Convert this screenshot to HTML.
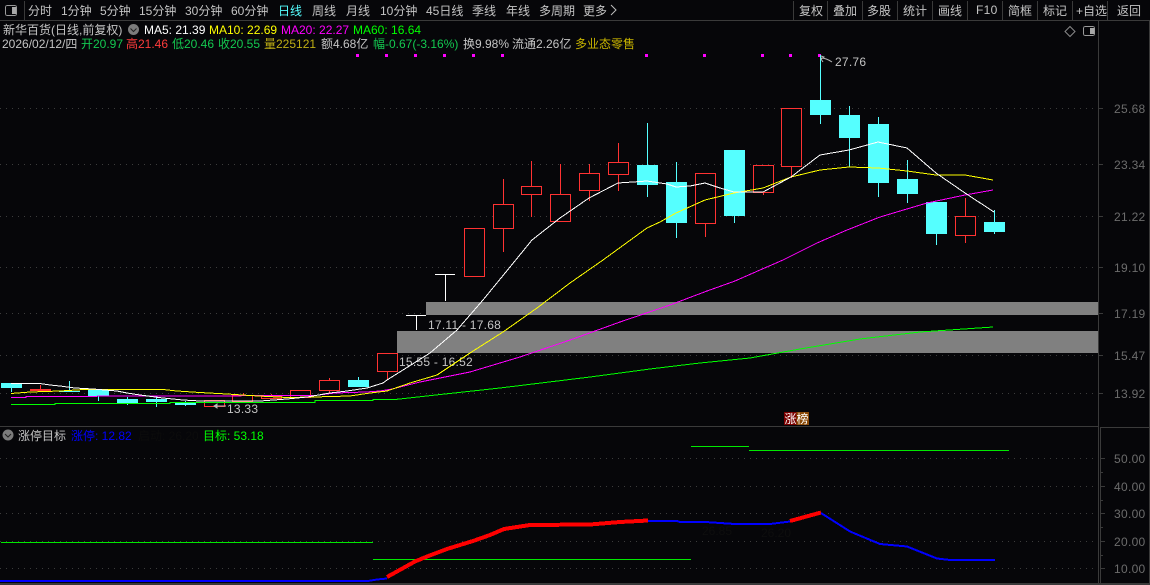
<!DOCTYPE html>
<html><head><meta charset="utf-8"><style>
html,body{margin:0;padding:0;background:#060609;width:1150px;height:585px;overflow:hidden}
svg{display:block}
text{font-family:"Liberation Sans","WenQuanYi Zen Hei","Noto Sans CJK SC",sans-serif;font-size:12px;fill:#c4c4c4}
.m{letter-spacing:0}
.r{letter-spacing:.25px}
.t{letter-spacing:.3px}
.a{fill:#6c6c6c;font-size:12px;letter-spacing:.3px}
.c{shape-rendering:crispEdges}
.hr rect{fill:#060609;stroke:#ff3232;stroke-width:1}
.hr path{stroke:#ff3232;stroke-width:1;fill:none}
.cy path{stroke:#55ffff;stroke-width:1;fill:none}
.cy rect{fill:#55ffff}
.ln{fill:none;stroke-width:1;shape-rendering:crispEdges}
</style></head><body>
<svg width="1150" height="585" viewBox="0 0 1150 585" xmlns="http://www.w3.org/2000/svg">
<rect width="1150" height="585" fill="#060609"/>
<!-- frame lines -->
<g class="c" fill="#3a3a3a">
<rect x="0" y="20" width="1150" height="1"/>
<rect x="1098" y="21" width="1" height="562"/>
<rect x="0" y="426" width="1098" height="1"/>
<rect x="1100" y="427" width="50" height="1"/>
<rect x="1100" y="427" width="1" height="156"/>
<rect x="0" y="583" width="1150" height="2"/>
<rect x="1149" y="21" width="1" height="564"/>
<rect x="24" y="1" width="1" height="19"/>
<rect x="793" y="1" width="1" height="19"/><rect x="827" y="1" width="1" height="19"/><rect x="862" y="1" width="1" height="19"/><rect x="897" y="1" width="1" height="19"/><rect x="932" y="1" width="1" height="19"/><rect x="967" y="1" width="1" height="19"/><rect x="1002" y="1" width="1" height="19"/><rect x="1037" y="1" width="1" height="19"/><rect x="1072" y="1" width="1" height="19"/><rect x="1107" y="1" width="1" height="19"/>
<rect x="1098" y="108" width="5" height="1"/><rect x="1098" y="164" width="5" height="1"/><rect x="1098" y="216" width="5" height="1"/><rect x="1098" y="267" width="5" height="1"/><rect x="1098" y="313" width="5" height="1"/><rect x="1098" y="355" width="5" height="1"/><rect x="1098" y="393" width="5" height="1"/>
<rect x="1100" y="458" width="5" height="1"/><rect x="1100" y="486" width="5" height="1"/><rect x="1100" y="513" width="5" height="1"/><rect x="1100" y="541" width="5" height="1"/><rect x="1100" y="568" width="5" height="1"/>
<rect x="1100" y="472" width="3" height="1"/><rect x="1100" y="500" width="3" height="1"/><rect x="1100" y="527" width="3" height="1"/><rect x="1100" y="555" width="3" height="1"/>
</g>
<!-- grid -->
<g class="c" stroke="#3c3c3c" stroke-width="1" stroke-dasharray="1 5">
<path d="M0 108.5H1098M0 164.5H1098M0 216.5H1098M0 267.5H1098M0 313.5H1098M0 355.5H1098M0 393.5H1098"/>
<path d="M0 458.5H1098M0 486.5H1098M0 513.5H1098M0 541.5H1098M0 568.5H1098"/>
</g>
<!-- toolbar -->
<rect class="c" x="5.5" y="5.5" width="11" height="10" rx="2" fill="none" stroke="#9a9a9a"/>
<rect class="c" x="12" y="7" width="4" height="7" fill="#a8a8a8"/>
<g font-size="12">
<text x="28" y="15">分时</text><text x="61" y="15">1分钟</text><text x="100" y="15">5分钟</text><text x="139" y="15">15分钟</text><text x="185" y="15">30分钟</text><text x="231" y="15">60分钟</text><text x="278" y="15" style="fill:#55ffff">日线</text><text x="312" y="15">周线</text><text x="346" y="15">月线</text><text x="380" y="15">10分钟</text><text x="426" y="15">45日线</text><text x="472" y="15">季线</text><text x="506" y="15">年线</text><text x="539" y="15">多周期</text><text x="583" y="15">更多</text>
<path d="M611 5l5 5-5 5" fill="none" stroke="#bdbdbd"/>
<text x="799" y="15">复权</text><text x="833" y="15">叠加</text><text x="867" y="15">多股</text><text x="903" y="15">统计</text><text x="938" y="15">画线</text><text x="976" y="14" class="t">F10</text><text x="1008" y="15">简框</text><text x="1043" y="15">标记</text><text x="1076" y="15">+自选</text><text x="1117" y="15">返回</text>
</g>
<!-- info rows -->
<text x="3" y="34">新华百货(日线,前复权)</text>
<circle cx="133.500" cy="29.500" r="5.500" fill="#7c7c7c"/><path d="M130.500 28.500l3 3 3-3" fill="none" stroke="#222"/>
<text x="144" y="34" class="m" style="fill:#fff">MA5: 21.39</text>
<text x="209" y="34" class="m" style="fill:#ffff00">MA10: 22.69</text>
<text x="281" y="34" class="m" style="fill:#ff00ff">MA20: 22.27</text>
<text x="353" y="34" class="m" style="fill:#00ff00">MA60: 16.64</text>
<text x="2" y="48" class="m">2026/02/12/四</text>
<text x="81" y="48" class="m" style="fill:#14c850">开20.97</text>
<text x="126" y="48" class="m" style="fill:#ff3c3c">高21.46</text>
<text x="172" y="48" class="m" style="fill:#14c850">低20.46</text>
<text x="218" y="48" class="m" style="fill:#14c850">收20.55</text>
<text x="264" y="48" class="m" style="fill:#bfae14">量225121</text>
<text x="321" y="48" class="m">额4.68亿</text>
<text x="373" y="48" class="m" style="fill:#14c850">幅-0.67(-3.16%)</text>
<text x="463" y="48" class="m">换9.98%</text>
<text x="512" y="48" class="m">流通2.26亿</text>
<text x="575" y="48" style="fill:#c8b400">多业态零售</text>
<path d="M1070 26.500l5 5-5 5-5-5z" fill="none" stroke="#8a8a8a"/>
<rect class="c" x="1083.500" y="26.500" width="11" height="9" rx="2" fill="none" stroke="#9a9a9a"/><rect class="c" x="1090" y="28" width="4" height="6" fill="#a8a8a8"/>
<!-- magenta markers -->
<g class="c" fill="#ff00ff"><rect x="356" y="54" width="3" height="3"/><rect x="385" y="54" width="3" height="3"/><rect x="414" y="54" width="3" height="3"/><rect x="443" y="54" width="3" height="3"/><rect x="472" y="54" width="3" height="3"/><rect x="501" y="54" width="3" height="3"/><rect x="645" y="54" width="3" height="3"/><rect x="703" y="54" width="3" height="3"/><rect x="761" y="54" width="3" height="3"/><rect x="789" y="54" width="3" height="3"/><rect x="818" y="54" width="3" height="3"/></g>
<!-- cyan candles -->
<g class="cy c">
<path d="M11.500 388V392M69.500 381V392M98.500 396V401M127.500 397V405M156.500 397V407M185.500 401V406M358.500 377V381M647.500 123V197M676.500 162V238M734.500 216V223M820.500 55V124M849.500 106V167M878.500 117V197M907.500 160V203M936.500 234V245M994.500 210V234"/>
<rect x="1" y="383" width="21" height="5"/><rect x="59" y="391" width="21" height="1"/><rect x="88" y="389" width="21" height="7"/><rect x="117" y="399" width="21" height="4"/><rect x="146" y="399" width="21" height="3"/><rect x="175" y="402" width="21" height="3"/><rect x="348" y="380" width="21" height="7"/>
<rect x="637" y="165" width="21" height="20"/><rect x="666" y="182" width="21" height="41"/><rect x="724" y="150" width="21" height="66"/><rect x="810" y="100" width="21" height="15"/><rect x="839" y="115" width="21" height="23"/><rect x="868" y="124" width="21" height="59"/><rect x="897" y="179" width="21" height="15"/><rect x="926" y="202" width="21" height="32"/><rect x="984" y="222" width="21" height="10"/>
</g>
<!-- red candles -->
<g class="hr c">
<path d="M40.500 385V390M243.500 393V396M271.500 394V397M329.500 378V381M329.500 391V393M387.500 371V380M503.500 179V204M503.500 229V252M531.500 161V186M531.500 195V217M560.500 164V194M589.500 164V173M589.500 191V201M618.500 143V162M618.500 174V191M705.500 224V237M763.500 192V195M791.500 167V178M965.500 198V216M965.500 236V243"/>
<rect x="30" y="389" width="21" height="2" style="fill:#ff3232;stroke:none"/>
<rect x="204.500" y="400.500" width="20" height="6"/><rect x="232.500" y="395.500" width="20" height="6"/><rect x="261.500" y="396.500" width="20" height="2"/><rect x="290.500" y="390.500" width="20" height="7"/><rect x="319.500" y="380.500" width="20" height="10"/>
<rect x="377.500" y="353.500" width="20" height="18"/><rect x="464.500" y="228.500" width="20" height="48"/><rect x="493.500" y="204.500" width="20" height="24"/><rect x="521.500" y="186.500" width="20" height="8"/><rect x="550.500" y="194.500" width="20" height="27"/><rect x="579.500" y="173.500" width="20" height="17"/><rect x="608.500" y="162.500" width="20" height="12"/><rect x="695.500" y="173.500" width="20" height="50"/><rect x="753.500" y="165.500" width="20" height="27"/><rect x="781.500" y="108.500" width="20" height="58"/><rect x="955.500" y="216.500" width="20" height="19"/>
</g>
<!-- T candles -->
<path class="c" d="M406 315.500H426M416.500 315V330M435 274.500H455M445.500 274V301" stroke="#fff" fill="none"/>
<!-- bands -->
<rect class="c" x="426" y="302" width="672" height="13" fill="#808080"/>
<rect class="c" x="397" y="331" width="701" height="22" fill="#808080"/>
<!-- labels -->
<text x="428" y="329" class="r">17.11 - 17.68</text>
<text x="399" y="366" class="r">15.55 - 16.52</text>
<text x="835" y="66" class="r">27.76</text>
<text x="227" y="413" class="r">13.33</text>
<path d="M821 56l3 1 -3 2 2 3M821 58q5 0 11 4" fill="none" stroke="#b8b8b8"/>
<path d="M214 406l3-2v4zM216 406H226" fill="#b8b8b8" stroke="#b8b8b8"/>
<!-- MAs -->
<polyline class="ln" stroke="#00ff00" points="11,404.500 55,404.500 55,403.500 170,403.500 170,402.500 315,402.500 315,400.500 373,400.500 373,399.500 395,399.500 445,394 500,388 590,377 650,369 700,363 750,358 800,349 860,339 920,332 993,327"/>
<polyline class="ln" stroke="#ff00ff" points="11,397.500 26,397.500 26,396.500 315,395.500 335,393 366,392 380,391 392,389 420,382 470,372 520,357 570,340 620,322 670,305 707,291 735,281 760,270 783,260 817,243 847,230 880,217 927,203 965,195 993,190"/>
<polyline class="ln" stroke="#ffff00" points="11,393.500 30,392 60,391 84,389.500 163,389.500 177,391 200,392.500 227,394 250,395.500 287,397.500 313,397 350,396 370,393 387,391 410,383 437,375 470,353 503,332 537,308 570,283 603,260 647,228 660,222 676,213 705,200 734,193 763,188 791,177 820,170 849,167 878,168 907,171 936,175 965,175 993,180"/>
<polyline class="ln" stroke="#ffffff" points="11,383.500 40,383.500 50,385 60,386 75,388 93,389 117,391 127,393 140,395 163,398 183,400 200,401 260,401 287,399 307,397 330,393 347,391 367,388 383,383 387,380 403,370 430,353 457,330 483,300 510,267 532,240 560,218 589,198 618,183 633,182 647,181 667,184 676,187 690,186 705,183 720,188 734,192 763,192 791,177 820,155 849,150 878,142 907,148 936,173 965,193 994,212"/>
<!-- 涨榜 -->
<rect class="c" x="784" y="412" width="12.500" height="13" fill="#7a0000"/><rect class="c" x="796.500" y="412" width="12.500" height="13" fill="#8a4a08"/>
<text x="784.500" y="423" style="fill:#fff">涨榜</text>
<!-- lower panel header -->
<circle cx="8" cy="435" r="5.500" fill="#7c7c7c"/><path d="M5 434l3 3 3-3" fill="none" stroke="#222"/>
<text x="18" y="440">涨停目标</text>
<text x="71" y="440" class="m" style="fill:#0000ff">涨停: 12.82</text>
<text x="138" y="440" class="m" style="fill:#0c0c0c">启动: 26.20</text>
<text x="203" y="440" class="m" style="fill:#00ff00">目标: 53.18</text>
<!-- lower panel -->
<path class="c" d="M1 542.500H373M373 559.500H691M691 446.500H749M749 450.500H1009" stroke="#00e800" fill="none"/>
<text x="702" y="535" style="fill:#0e0e0e;font-size:12px">26.85</text>
<text x="761" y="537" style="fill:#0e0e0e;font-size:12px">26.20</text>
<polyline class="c" fill="none" stroke="#0000ff" stroke-width="2" points="0,581 368,581 377,579.500 387,578.500"/>
<polyline class="c" fill="none" stroke="#ff0000" stroke-width="4" points="387,577 415,561.500 427,556.500 447,549 473,541 490,535 504,529 530,525 590,524.500 620,522 648,520.500"/>
<polyline class="c" fill="none" stroke="#0000ff" stroke-width="2" points="648,521 677,521 680,522 705,522 735,524 770,524 790,521.500"/>
<polyline class="c" fill="none" stroke="#ff0000" stroke-width="4" points="790,521 821,512.500"/>
<polyline class="c" fill="none" stroke="#0000ff" stroke-width="2" points="821,513 850,531.500 880,544 907,546.500 937,558.500 950,560 995,560"/>
<!-- axis labels -->
<text x="1114" y="113" class="a">25.68</text><text x="1114" y="169" class="a">23.34</text><text x="1114" y="221" class="a">21.22</text><text x="1114" y="272" class="a">19.10</text><text x="1114" y="318" class="a">17.19</text><text x="1114" y="360" class="a">15.47</text><text x="1114" y="398" class="a">13.92</text>
<text x="1114" y="463" class="a">50.00</text><text x="1114" y="491" class="a">40.00</text><text x="1114" y="518" class="a">30.00</text><text x="1114" y="546" class="a">20.00</text><text x="1114" y="573" class="a">10.00</text>
</svg>
</body></html>
